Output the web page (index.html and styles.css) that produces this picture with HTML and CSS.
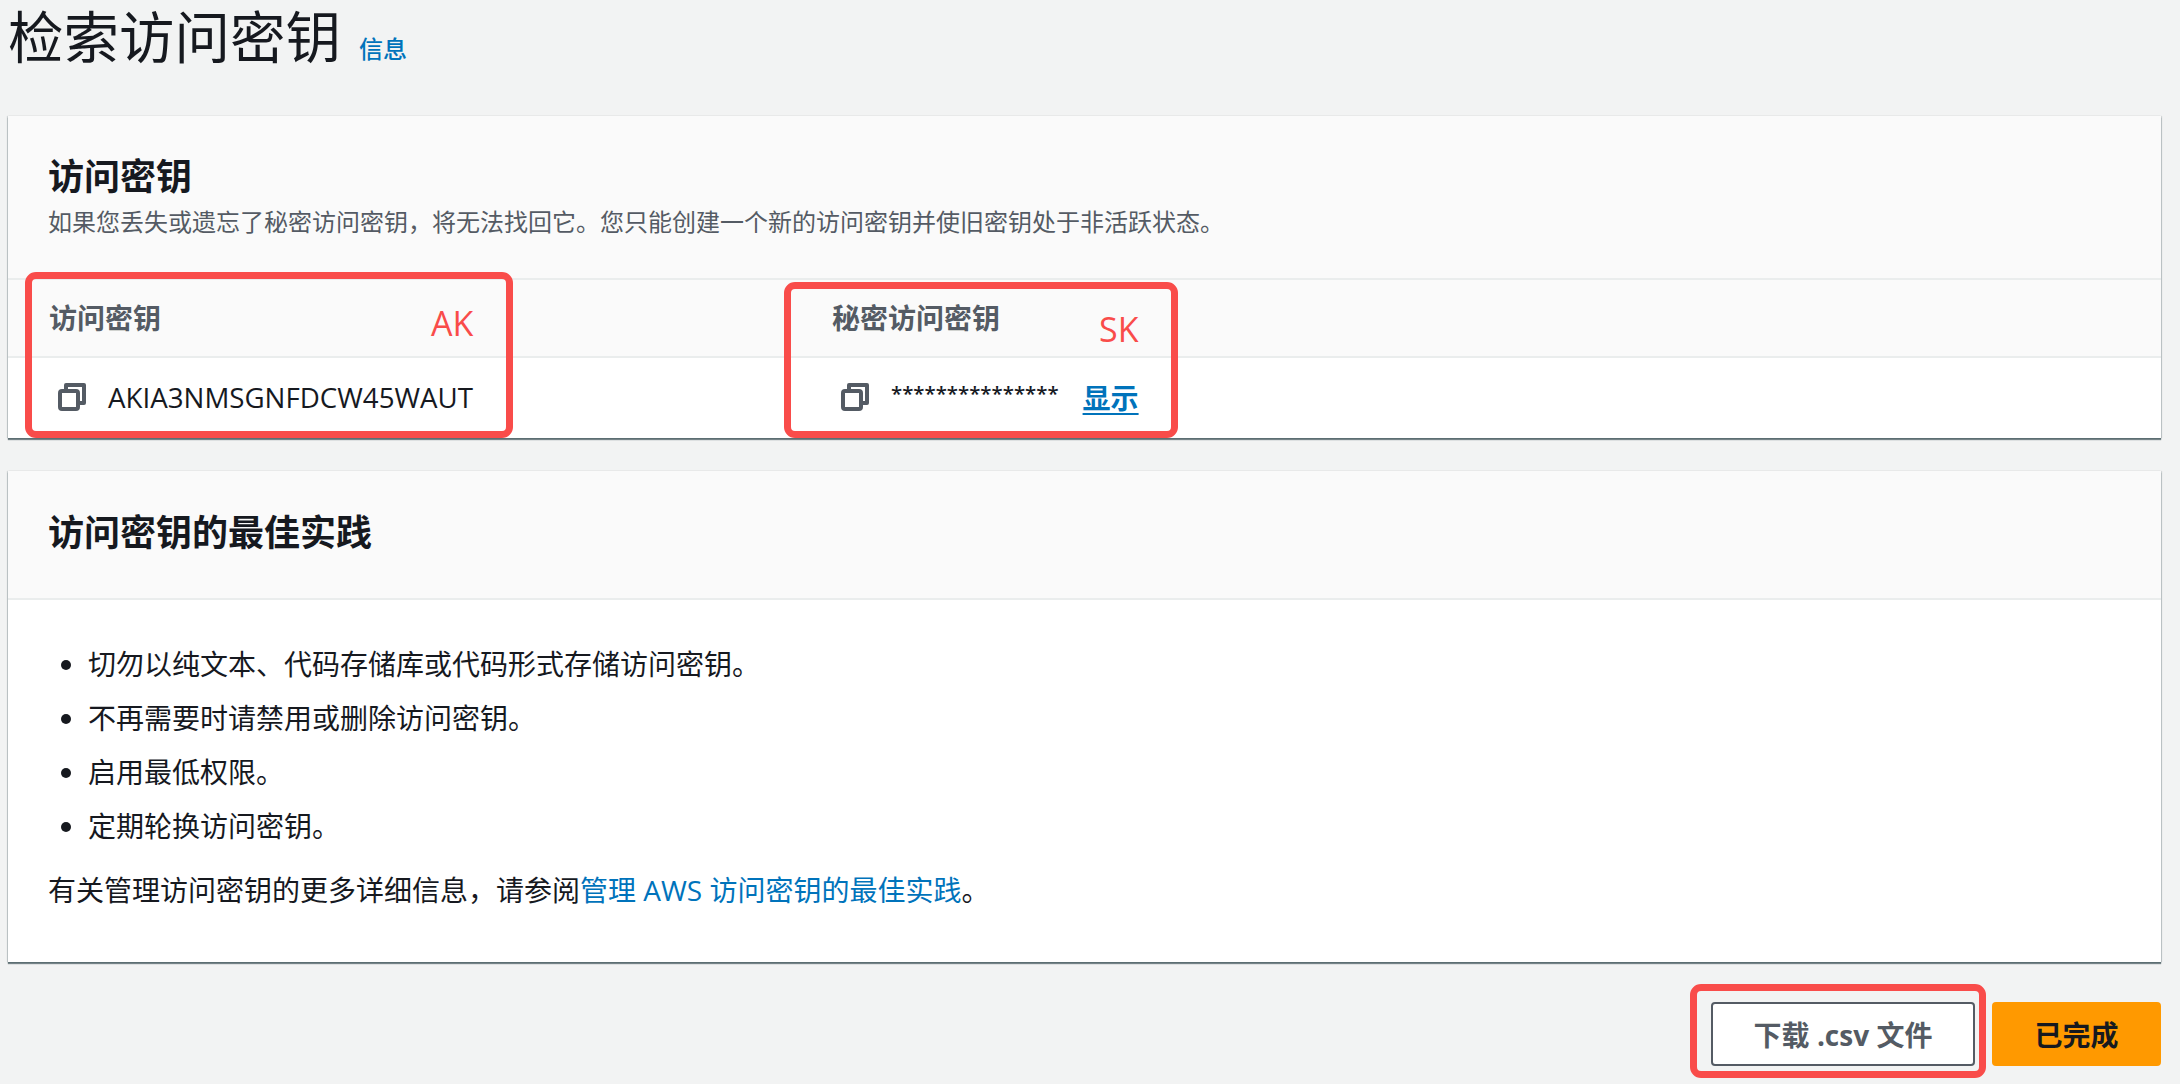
FILE: index.html
```html
<!DOCTYPE html>
<html lang="zh-CN">
<head>
  <meta charset="UTF-8">
  <meta name="viewport" content="width=device-width, initial-scale=1.0">
  <title>检索访问密钥</title>
  <link rel="stylesheet" href="styles.css">
</head>
<body>
  <header class="page-head">
    <h1>检索访问密钥</h1>
    <a href="#" class="info-link">信息</a>
  </header>

  <section class="card card-keys">
    <div class="card-head">
      <h2>访问密钥</h2>
      <p>如果您丢失或遗忘了秘密访问密钥，将无法找回它。您只能创建一个新的访问密钥并使旧密钥处于非活跃状态。</p>
    </div>
    <div class="key-table">
      <div class="key-row key-labels">
        <div class="col-ak">访问密钥</div>
        <div class="col-sk">秘密访问密钥</div>
      </div>
      <div class="key-row key-values">
        <div class="col-ak value-cell">
          <svg class="copy-icon" viewBox="0 0 28 28"><path d="M8 7V2h18v18h-5"/><rect x="2" y="8" width="18" height="18" rx="2"/></svg>
          <span class="key-text">AKIA3NMSGNFDCW45WAUT</span>
        </div>
        <div class="col-sk value-cell">
          <svg class="copy-icon" viewBox="0 0 28 28"><path d="M8 7V2h18v18h-5"/><rect x="2" y="8" width="18" height="18" rx="2"/></svg>
          <span class="secret-text">***************</span>
          <a href="#" class="show-link">显示</a>
        </div>
      </div>
    </div>
  </section>

  <section class="card card-tips">
    <div class="card-head">
      <h2>访问密钥的最佳实践</h2>
    </div>
    <div class="card-body">
      <ul>
        <li>切勿以纯文本、代码存储库或代码形式存储访问密钥。</li>
        <li>不再需要时请禁用或删除访问密钥。</li>
        <li>启用最低权限。</li>
        <li>定期轮换访问密钥。</li>
      </ul>
      <p>有关管理访问密钥的更多详细信息，请参阅<a href="#">管理 AWS 访问密钥的最佳实践</a>。</p>
    </div>
  </section>

  <div class="actions">
    <button class="btn btn-normal">下载 .csv 文件</button>
    <button class="btn btn-primary">已完成</button>
  </div>

  <!-- red annotations drawn over the screenshot -->
  <div class="mark mark-ak"><span>AK</span></div>
  <div class="mark mark-sk"><span>SK</span></div>
  <div class="mark mark-csv"></div>
</body>
</html>
```

FILE: styles.css
```css
* {
  box-sizing: border-box;
}
body {
  position: relative;
  margin: 0;
  height: 1084px;
  padding: 0 19px 0 8px;
  overflow: hidden;
  background: #f2f3f3;
  color: #16191f;
  font-family: "Open Sans", "Noto Sans CJK SC", sans-serif;
  font-size: 28px;
}
a {
  color: #0073bb;
  text-decoration: none;
}
.page-head {
  display: flex;
  align-items: baseline;
  gap: 18px;
  height: 116px;
}
h1 {
  margin: 0;
  font-size: 55.5px;
  font-weight: 400;
  line-height: 73px;
}
.info-link {
  font-size: 24px;
  font-weight: 500;
}
.card {
  background: #fff;
  box-shadow: 0 1px 1px rgba(0,28,36,0.2), 0 2px 1px rgba(0,28,36,0.5), -1px 0 1px rgba(0,28,36,0.12), 1px 0 1px rgba(0,28,36,0.12);
}
.card-head {
  background: #fafafa;
  padding: 0 40px;
}
.card-head h2 {
  margin: 0;
  font-size: 36px;
  font-weight: 700;
  line-height: 48px;
}
.card-head p {
  margin: 0;
  color: #545b64;
  font-size: 24px;
  line-height: 34px;
}
.card-keys {
  height: 322px;
}
.card-keys .card-head {
  height: 162px;
  padding-top: 37px;
}
.card-keys .card-head p {
  margin-top: 4px;
}
.key-table {
  border-top: 2px solid #eaeded;
}
.key-row {
  display: flex;
  padding-left: 41px;
}
.col-ak {
  width: 783px;
}
.key-labels {
  height: 78px;
  padding-top: 19px;
  background: #fafafa;
  border-bottom: 2px solid #eaeded;
  color: #545b64;
  font-size: 28px;
  font-weight: 700;
  line-height: 38px;
}
.key-values {
  height: 80px;
}
.value-cell {
  display: flex;
  align-items: center;
  height: 78px;
}
.copy-icon {
  width: 28px;
  height: 28px;
  margin-left: 9px;
  fill: none;
  stroke: #545b64;
  stroke-width: 4;
  stroke-linejoin: round;
  flex: none;
}
.key-text {
  margin-left: 22px;
  font-size: 27.7px;
  white-space: nowrap;
}
.secret-text {
  margin-left: 22px;
  font-size: 20.4px;
  font-weight: 600;
  position: relative;
  top: -4px;
}
.show-link {
  margin-left: 24px;
  font-weight: 700;
  text-decoration: underline;
  text-underline-offset: 4px;
}
.card-tips {
  height: 491px;
  margin-top: 33px;
}
.card-tips .card-head {
  display: flex;
  align-items: center;
  height: 129px;
  padding-bottom: 3px;
  border-bottom: 2px solid #eaeded;
}
.card-body {
  padding: 37px 40px 0;
}
.card-body ul {
  margin: 0;
  padding: 0 0 0 40px;
}
.card-body li {
  height: 54px;
  line-height: 54px;
}
.card-body p {
  margin: 10px 0 0;
  line-height: 54px;
}
.actions {
  display: flex;
  justify-content: flex-end;
  gap: 17px;
  margin-top: 40px;
}
.btn {
  height: 64px;
  border-radius: 4px;
  font-family: inherit;
  font-size: 28px;
  font-weight: 700;
  padding: 0;
}
.btn-normal {
  width: 264px;
  background: #fff;
  border: 2px solid #545b64;
  color: #545b64;
}
.btn-primary {
  width: 169px;
  background: #ff9900;
  border: none;
  color: #16191f;
}
.mark {
  position: absolute;
  border: 7px solid #f94c4a;
  border-radius: 11px;
}
.mark span {
  position: absolute;
  color: #f94c4a;
  font-size: 34px;
  line-height: 40px;
}
.mark-ak {
  left: 25px;
  top: 272px;
  width: 488px;
  height: 166px;
}
.mark-ak span {
  left: 399px;
  top: 24px;
}
.mark-sk {
  left: 784px;
  top: 282px;
  width: 394px;
  height: 156px;
}
.mark-sk span {
  left: 308px;
  top: 20px;
}
.mark-csv {
  left: 1690px;
  top: 984px;
  width: 296px;
  height: 94px;
}
```
